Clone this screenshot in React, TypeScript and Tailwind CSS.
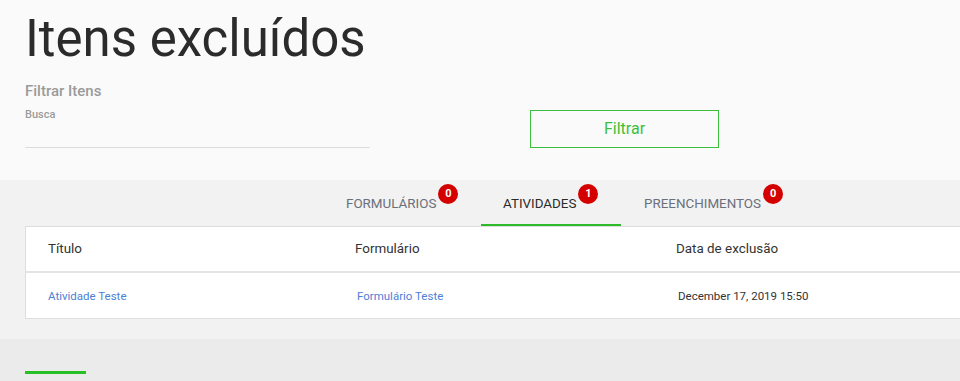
import React from "react";

const Badge = ({ n }: { n: number }) => (
  <span className="absolute -top-[10px] -right-[22px] flex h-[20px] w-[20px] items-center justify-center rounded-full bg-[#d40000] text-[11px] font-bold text-white">
    {n}
  </span>
);

export default function App() {
  return (
    <div className="h-[381px] w-[960px] overflow-hidden bg-[#fafafa] font-['Roboto',sans-serif]">
      <div className="h-[180px] px-[25px] pt-[9px]">
        <h1 className="text-[51px] font-normal leading-[60px] text-[#2b2b2b]">Itens excluídos</h1>
        <div className="mt-[13px] flex items-start">
          <div className="w-[345px]">
            <div className="text-[15px] font-medium leading-[18px] text-[#9a9a9a]">Filtrar Itens</div>
            <div className="mt-[8px] text-[11px] font-medium leading-[14px] text-[#9a9a9a]">Busca</div>
            <div className="mt-[25px] h-px bg-[#dcdcdc]" />
          </div>
          <button className="ml-[160px] mt-[28px] h-[38px] w-[189px] border border-[#3cbf3c] text-[16px] text-[#3cbf3c]">
            Filtrar
          </button>
        </div>
      </div>
      <div className="bg-[#f2f2f2]">
        <div className="flex h-[46px] pl-[324px]">
          <div className="flex h-full w-[157px] items-center pl-[22px] pt-[3px] text-[13.4px] text-[#6b6f7a]">
            <span className="relative">FORMULÁRIOS<Badge n={0} /></span>
          </div>
          <div className="flex h-full w-[140px] items-center border-b-2 border-[#2dbb2d] pl-[22px] pt-[5px] text-[13.4px] text-[#2b2b2b]">
            <span className="relative">ATIVIDADES<Badge n={1} /></span>
          </div>
          <div className="flex h-full w-[170px] items-center pl-[23px] pt-[3px] text-[13.4px] text-[#6b6f7a]">
            <span className="relative">PREENCHIMENTOS<Badge n={0} /></span>
          </div>
        </div>
        <div className="pb-[20px] pl-[25px]">
          <div className="border border-r-0 border-[#dedede] bg-white">
            <div className="flex h-[46px] items-center border-b-2 border-[#e4e4e4] pt-[1px] text-[13.4px] text-[#333]">
              <div className="w-[329px] pl-[22px]">Título</div>
              <div className="w-[321px]">Formulário</div>
              <div>Data de exclusão</div>
            </div>
            <div className="flex h-[45px] items-center pt-[2px] text-[11.5px]">
              <div className="w-[329px] pl-[22px] text-[#4e7fd6]">Atividade Teste</div>
              <div className="w-[321px] pl-[2px] text-[#4e7fd6]">Formulário Teste</div>
              <div className="pl-[2px] text-[#333]">December 17, 2019 15:50</div>
            </div>
          </div>
        </div>
      </div>
      <div className="h-[60px] bg-[#ebebeb] px-[25px] pt-[32px]">
        <div className="h-[3px] w-[61px] bg-[#27c027]" />
      </div>
    </div>
  );
}
